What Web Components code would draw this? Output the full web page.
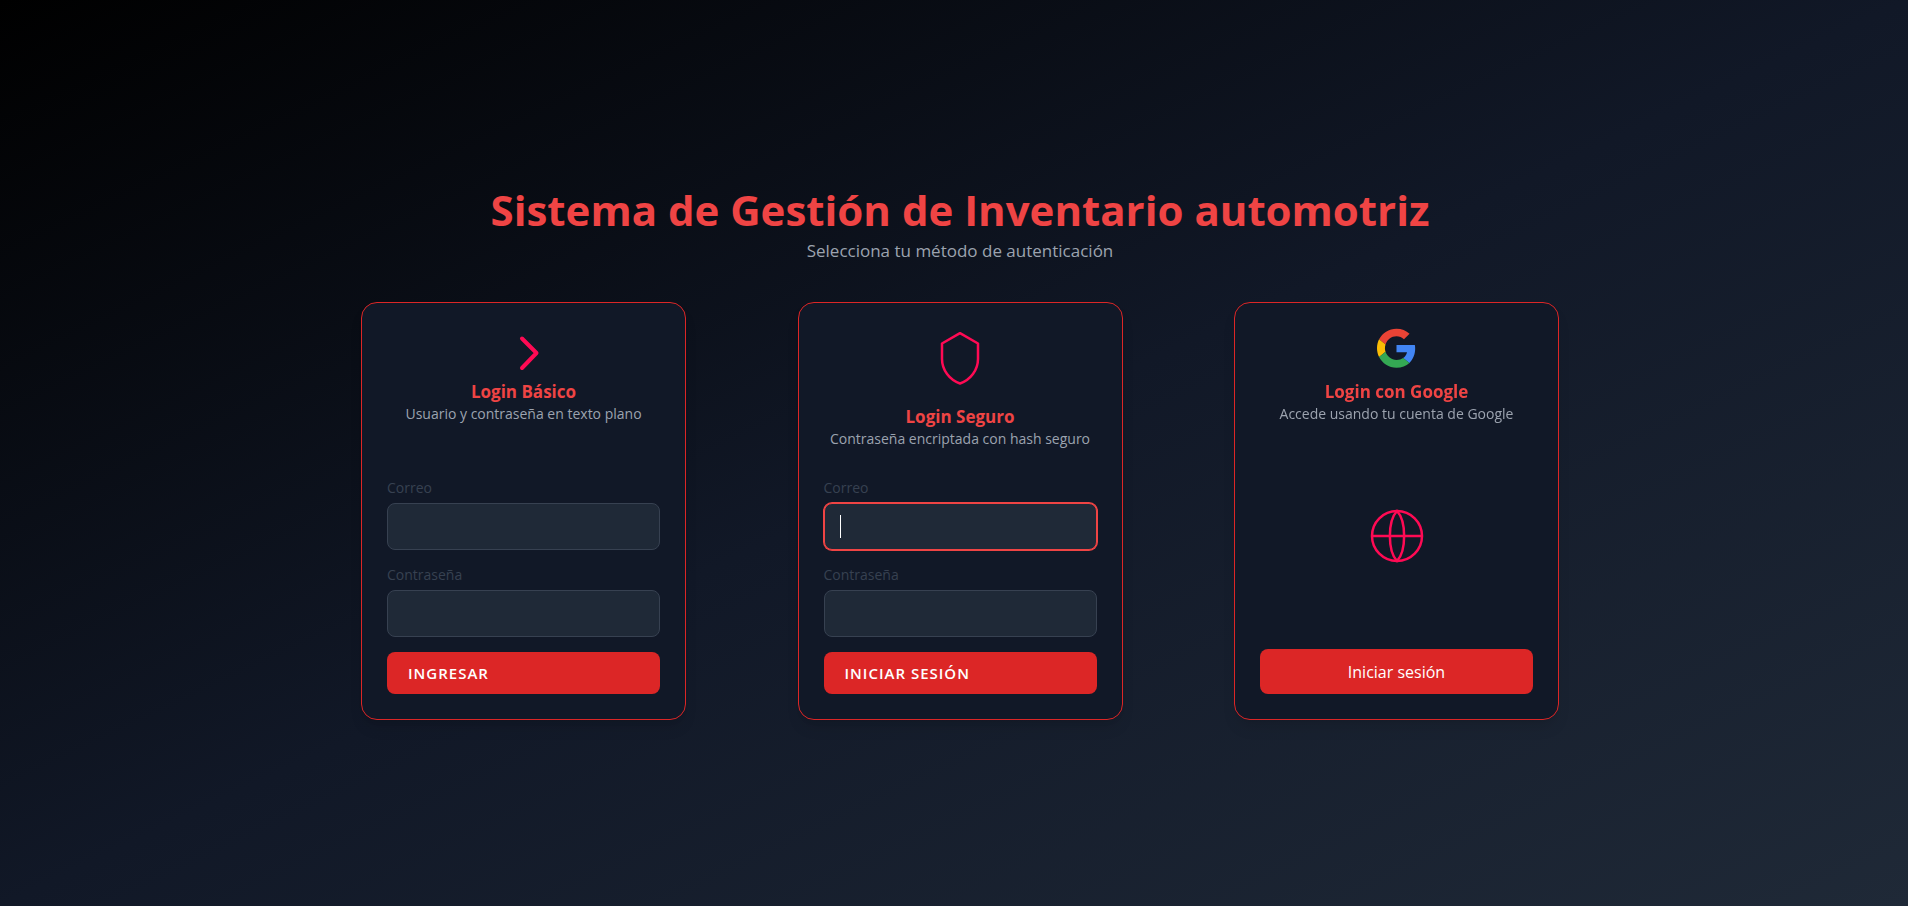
<!DOCTYPE html>
<html lang="es">
<head>
<meta charset="utf-8">
<title>Sistema de Gestión de Inventario automotriz</title>
<style>
body { margin: 0; font-family: "Segoe UI", "Open Sans", "Noto Sans", sans-serif; }
</style>
</head>
<body>
<login-page>
  <login-card heading="Login Básico" note="Usuario y contraseña en texto plano">
    <svg slot="icon" width="50" height="50" viewBox="0 0 50 50" fill="none" stroke="#ff0a54" stroke-width="4" stroke-linecap="round" stroke-linejoin="round" aria-hidden="true"><path d="M23 10.500 37.500 25 23 40"/></svg>
    <login-form action-label="Ingresar"></login-form>
  </login-card>
  <login-card heading="Login Seguro" note="Contraseña encriptada con hash seguro">
    <svg slot="icon" width="75" height="75" viewBox="0 0 75 75" fill="none" stroke="#ff0a54" stroke-width="2.500" stroke-linejoin="round" aria-hidden="true"><path d="M37 5.200 55 15.500V31C55 42 47.500 52 37 55.500 26.500 52 19 42 19 31V15.500Z"/></svg>
    <login-form action-label="Iniciar sesión" focused></login-form>
  </login-card>
  <login-card heading="Login con Google" note="Accede usando tu cuenta de Google">
    <svg slot="icon" width="39" height="50" viewBox="0 0 48 60" aria-hidden="true"><path fill="#ea4335" d="M24 9.500c3.540 0 6.710 1.220 9.210 3.600l6.850-6.850C35.900 2.380 30.470 0 24 0 14.620 0 6.510 5.380 2.560 13.220l7.980 6.190C12.430 13.720 17.740 9.500 24 9.500z"/><path fill="#4285f4" d="M46.980 24.550c0-1.570-.15-3.090-.38-4.550H24v9.020h12.940c-.58 2.960-2.260 5.480-4.780 7.180l7.730 6c4.510-4.180 7.090-10.360 7.090-17.650z"/><path fill="#fbbc05" d="M10.530 28.590c-.48-1.450-.76-2.990-.76-4.590s.27-3.140.76-4.590l-7.980-6.190C.92 16.460 0 20.120 0 24c0 3.880.92 7.540 2.560 10.780l7.970-6.190z"/><path fill="#34a853" d="M24 48c6.480 0 11.930-2.130 15.890-5.810l-7.730-6c-2.150 1.450-4.920 2.300-8.160 2.300-6.260 0-11.570-4.220-13.470-9.910l-7.980 6.190C6.510 42.620 14.620 48 24 48z"/></svg>
    <google-login></google-login>
  </login-card>
</login-page>

<script>
class LoginPage extends HTMLElement {
  constructor() {
    super();
    this.attachShadow({ mode: 'open' }).innerHTML = `
      <style>
        :host { display: block; }
        main {
          box-sizing: border-box; min-height: 100vh; padding: 0 0 4px 12px;
          display: flex; flex-direction: column; align-items: center; justify-content: center;
          background: linear-gradient(to bottom right, #000, #111827, #1f2937);
        }
        header { text-align: center; margin-bottom: 38px; }
        h1 { margin: 0; color: #ef4444; font-size: 42px; line-height: 56px; font-weight: 700; }
        p { margin: 0; color: #9ca3af; font-size: 17px; line-height: 26px; }
        section { width: 100%; max-width: 1198px; display: flex; flex-wrap: wrap; justify-content: space-between; gap: 32px; }
      </style>
      <main>
        <header>
          <h1>Sistema de Gestión de Inventario automotriz</h1>
          <p>Selecciona tu método de autenticación</p>
        </header>
        <section><slot></slot></section>
      </main>`;
  }
}

class LoginCard extends HTMLElement {
  constructor() {
    super();
    this.attachShadow({ mode: 'open' }).innerHTML = `
      <style>
        :host {
          box-sizing: border-box; width: 325px; min-height: 418px; padding: 25px;
          display: flex; flex-direction: column;
          background: #111827; border: 1px solid #dc2626; border-radius: 16px;
          box-shadow: 0 10px 15px -3px rgba(0,0,0,.1), 0 4px 6px -4px rgba(0,0,0,.1);
        }
        header { display: flex; flex-direction: column; align-items: center; text-align: center; }
        h2 { margin: 0; color: #ef4444; font-size: 17px; line-height: 28px; font-weight: 700; }
        p { margin: 0; color: #9ca3af; font-size: 14px; line-height: 16px; white-space: nowrap; }
        ::slotted(:not([slot])) { margin-top: auto; }
      </style>
      <header>
        <slot name="icon"></slot>
        <h2></h2>
        <p></p>
      </header>
      <slot></slot>`;
  }
  connectedCallback() {
    this.shadowRoot.querySelector('h2').textContent = this.getAttribute('heading');
    this.shadowRoot.querySelector('p').textContent = this.getAttribute('note');
  }
}

class LoginForm extends HTMLElement {
  constructor() {
    super();
    this.attachShadow({ mode: 'open' }).innerHTML = `
      <style>
        :host { display: block; }
        form { display: flex; flex-direction: column; }
        label { color: #374151; font-size: 14px; line-height: 20px; margin-bottom: 5px; }
        input {
          box-sizing: border-box; width: 100%; height: 47px; margin: 0 0 15px; padding: 0 15px;
          background: #1f2937; border: 1px solid #374151; border-radius: 8px;
          color: #fff; font: inherit; font-size: 16px; outline: none;
        }
        input:focus {
          border-color: #ef4444; box-shadow: 0 0 0 1px #ef4444; caret-color: transparent;
          background: linear-gradient(#fff, #fff) 15px 11px / 1px 23px no-repeat #1f2937;
        }
        button {
          height: 42px; padding: 0 21px; border: 0; border-radius: 8px; background: #dc2626; color: #fff;
          font: inherit; font-size: 15px; font-weight: 600; letter-spacing: 1px;
          text-transform: uppercase; text-align: left; cursor: pointer;
        }
      </style>
      <form>
        <label for="email">Correo</label>
        <input id="email" type="email" autocomplete="off">
        <label for="password">Contraseña</label>
        <input id="password" type="password" autocomplete="off">
        <button type="button"></button>
      </form>`;
  }
  connectedCallback() {
    this.shadowRoot.querySelector('button').textContent = this.getAttribute('action-label');
    if (this.hasAttribute('focused')) this.shadowRoot.querySelector('#email').focus();
  }
}

class GoogleLogin extends HTMLElement {
  constructor() {
    super();
    this.attachShadow({ mode: 'open' }).innerHTML = `
      <style>
        :host { display: flex; flex-direction: column; align-items: center; gap: 83px; }
        button {
          width: 100%; height: 45px; border: 0; border-radius: 8px; background: #dc2626; color: #fff;
          font: inherit; font-size: 16px; cursor: pointer;
        }
      </style>
      <svg width="60" height="60" viewBox="0 0 60 60" fill="none" stroke="#ff0a54" stroke-width="2.500" aria-hidden="true">
        <circle cx="30" cy="30" r="25"/><path d="M5 30H55M30 5C20.500 15 20.500 45 30 55C39.500 45 39.500 15 30 5Z"/>
      </svg>
      <button type="button">Iniciar sesión</button>`;
  }
}

customElements.define('login-page', LoginPage);
customElements.define('login-card', LoginCard);
customElements.define('login-form', LoginForm);
customElements.define('google-login', GoogleLogin);
</script>
</body>
</html>
